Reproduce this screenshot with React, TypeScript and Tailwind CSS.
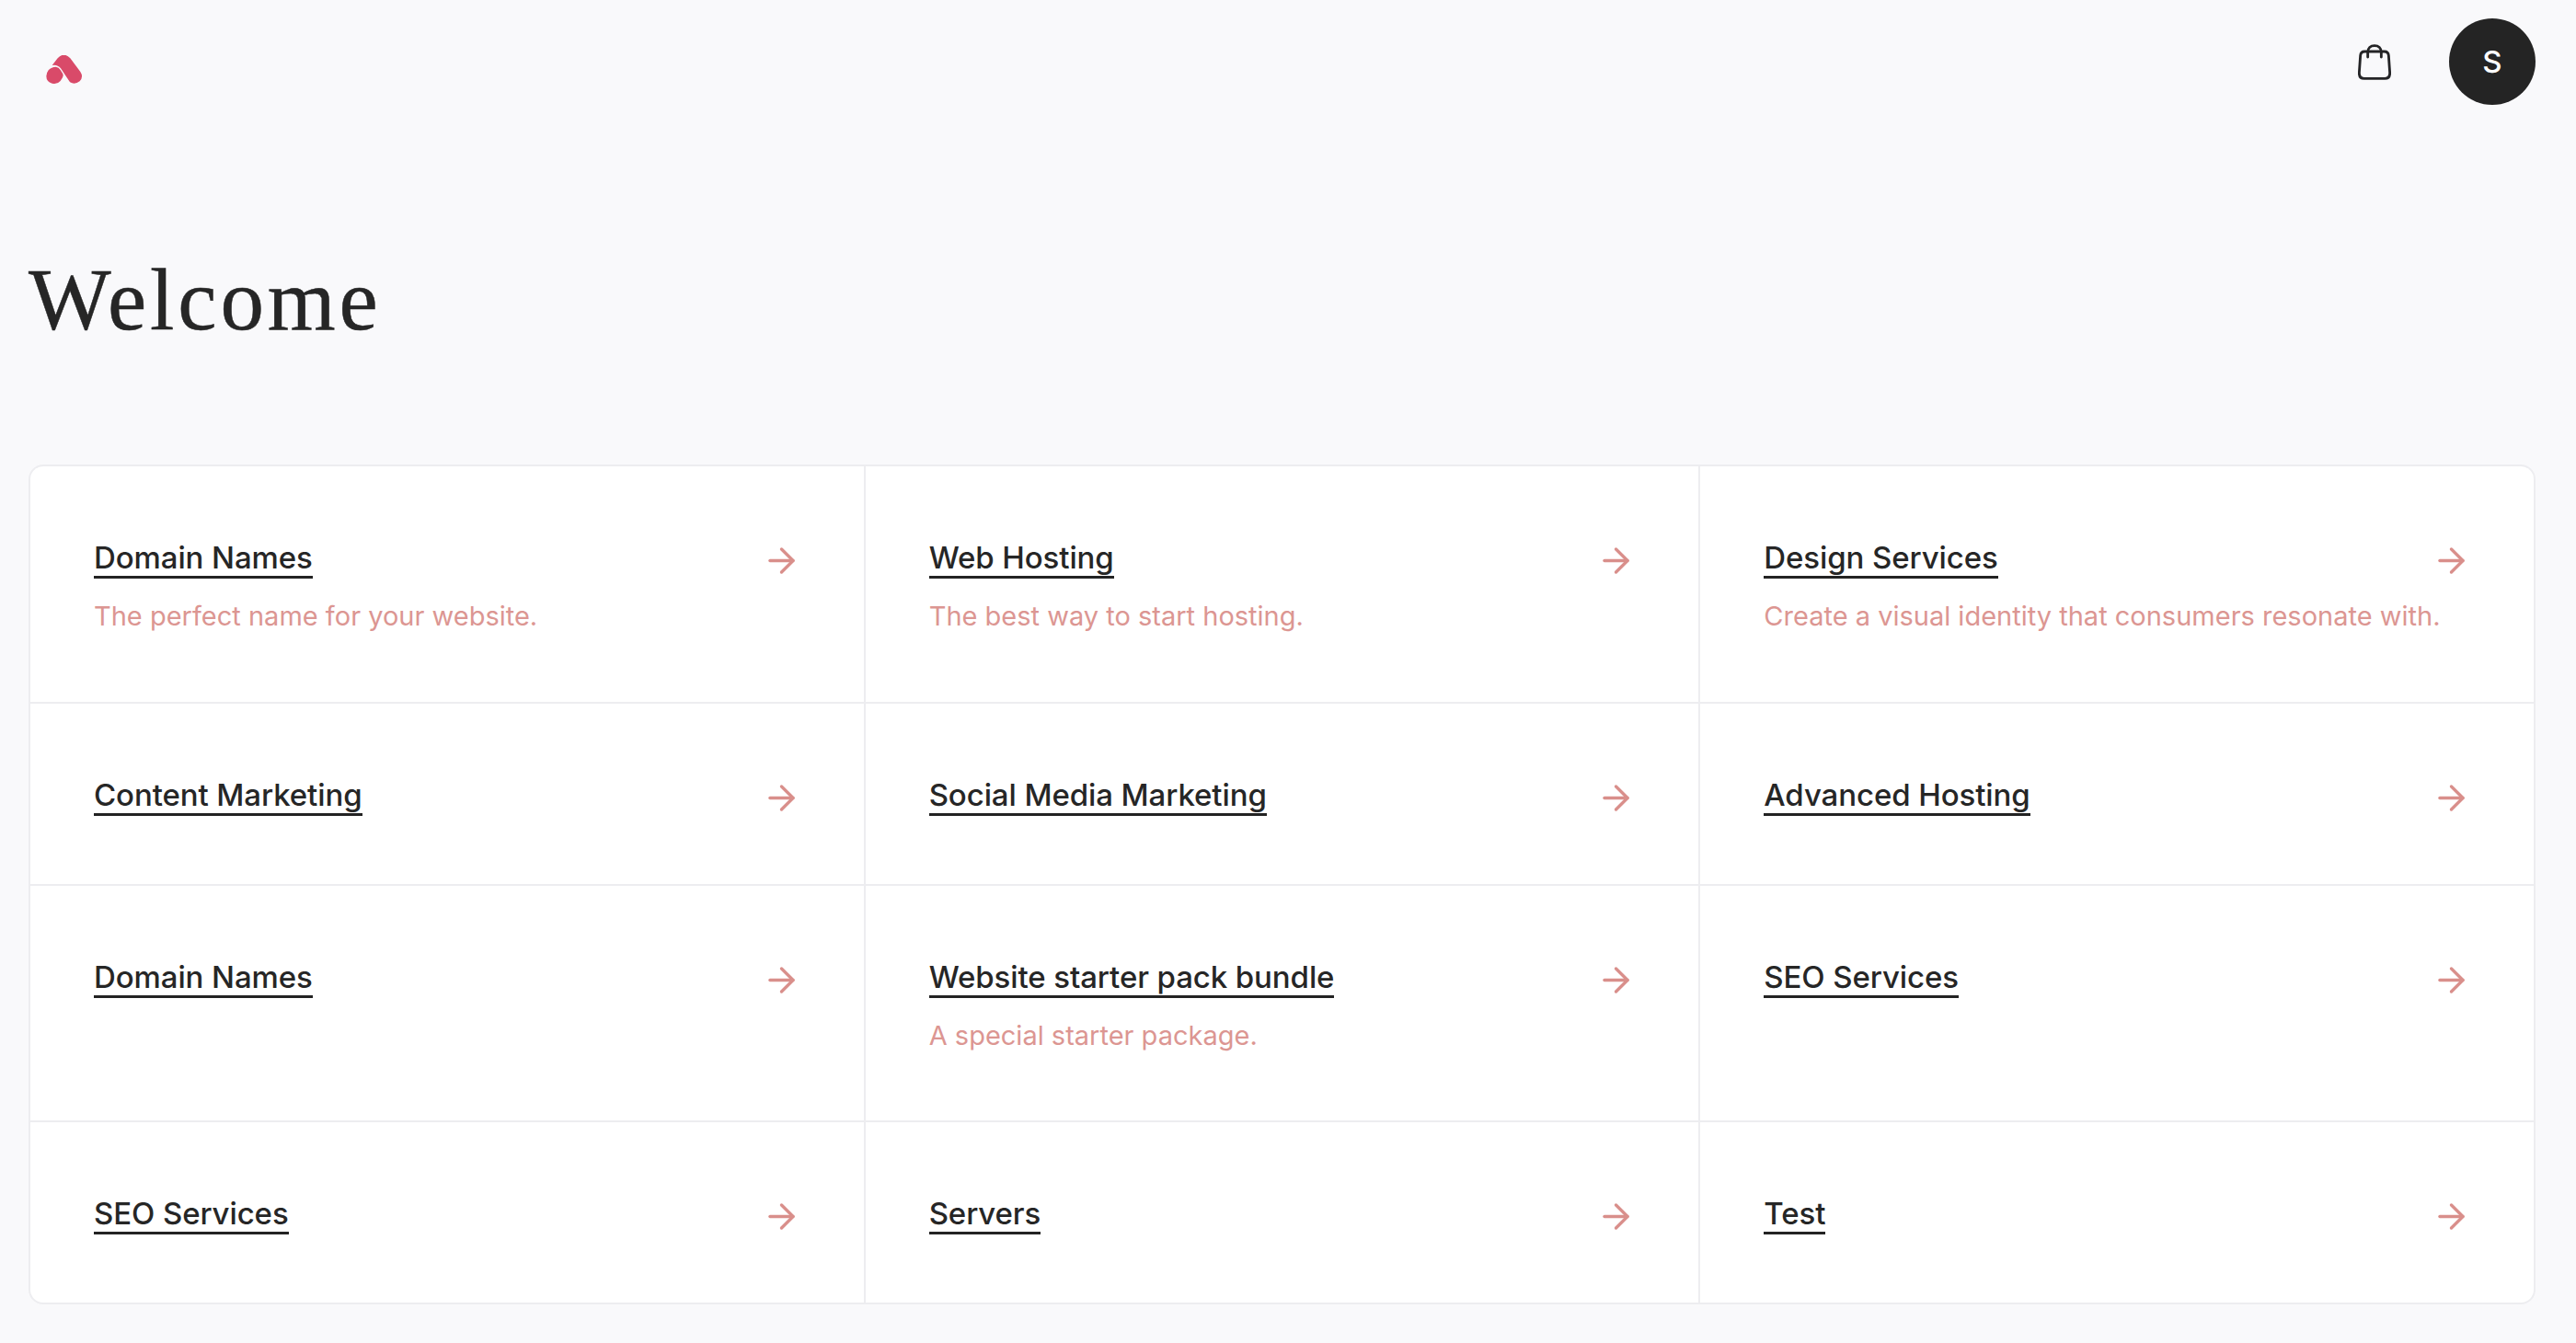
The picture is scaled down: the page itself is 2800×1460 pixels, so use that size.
import { ArrowRight } from "lucide-react";

type Category = {
  name: string;
  description?: string;
};

const categories: Category[] = [
  { name: "Domain Names", description: "The perfect name for your website." },
  { name: "Web Hosting", description: "The best way to start hosting." },
  {
    name: "Design Services",
    description: "Create a visual identity that consumers resonate with.",
  },
  { name: "Content Marketing" },
  { name: "Social Media Marketing" },
  { name: "Advanced Hosting" },
  { name: "Domain Names" },
  { name: "Website starter pack bundle", description: "A special starter package." },
  { name: "SEO Services" },
  { name: "SEO Services" },
  { name: "Servers" },
  { name: "Test" },
];

function Logo() {
  return (
    <svg viewBox="0 0 120 96" className="w-10 h-8" fill="#d94a69" aria-hidden>
      <path d="M20 33 38 10Q58-12 79 10L112 54Q123 71 110 85Q94 98 78 88L48 43Q38 30 20 33Z" />
      <path d="M8 49Q18 38 32 38Q42 39 47 48L55 61Q58 67 54 73L47 84Q37 96 20 92Q1 86 1 68Q2 57 8 49Z" />
    </svg>
  );
}

function BagIcon() {
  return (
    <svg
      viewBox="0 0 108 117"
      className="w-9 h-[39px]"
      fill="none"
      stroke="#242426"
      strokeWidth={8.5}
      strokeLinecap="round"
      aria-hidden
    >
      <path d="M22 24H86Q99 24 100 37L104 94Q104 112 88 112H20Q4 112 4 94L8 37Q9 24 22 24Z" />
      <path d="M32 42V27C32 13 41 5 54 5S76 13 76 27V42" />
    </svg>
  );
}

function CategoryCard({ name, description }: Category) {
  return (
    <div className="bg-white pl-[69px] pr-[68px] pt-[79px]">
      <div className="flex items-start justify-between">
        <a
          href="#"
          className="border-b-[3px] border-[#232323] text-[33px] leading-10 font-medium tracking-[-0.1px] whitespace-nowrap text-[#262626]"
        >
          {name}
        </a>
        <ArrowRight size={43} strokeWidth={1.9} className="mt-0.5 shrink-0 text-[#d98f8b]" />
      </div>
      {description && (
        <p className="mt-[21px] text-[29px] leading-[35px] whitespace-nowrap text-[#dc9692]">
          {description}
        </p>
      )}
    </div>
  );
}

export default function App() {
  return (
    <div className="h-[1460px] overflow-hidden bg-[#f9f9fb] pl-[31px] pr-11 font-['Inter',sans-serif]">
      <header className="flex items-start justify-between pt-5 pl-[19px]">
        <a href="#" className="mt-10">
          <Logo />
        </a>
        <div className="flex items-start gap-[63px]">
          <button type="button" className="mt-7">
            <BagIcon />
          </button>
          <div className="flex size-[94px] items-center justify-center rounded-full bg-[#242424] pt-0.5 text-[33px] font-medium text-white">
            S
          </div>
        </div>
      </header>

      <main>
        <h1 className="mt-[160px] font-['Liberation_Serif',serif] text-[95px] leading-[104px] tracking-[3.9px] text-[#262626] [-webkit-text-stroke:0.5px_#262626]">
          Welcome
        </h1>
        <div className="mt-[127px] grid grid-cols-3 grid-rows-[256px_196px_255px_196px] gap-0.5 overflow-hidden rounded-2xl border-2 border-[#ededf0] bg-[#ededf0]">
          {categories.map((category, i) => (
            <CategoryCard key={i} {...category} />
          ))}
        </div>
      </main>
    </div>
  );
}
